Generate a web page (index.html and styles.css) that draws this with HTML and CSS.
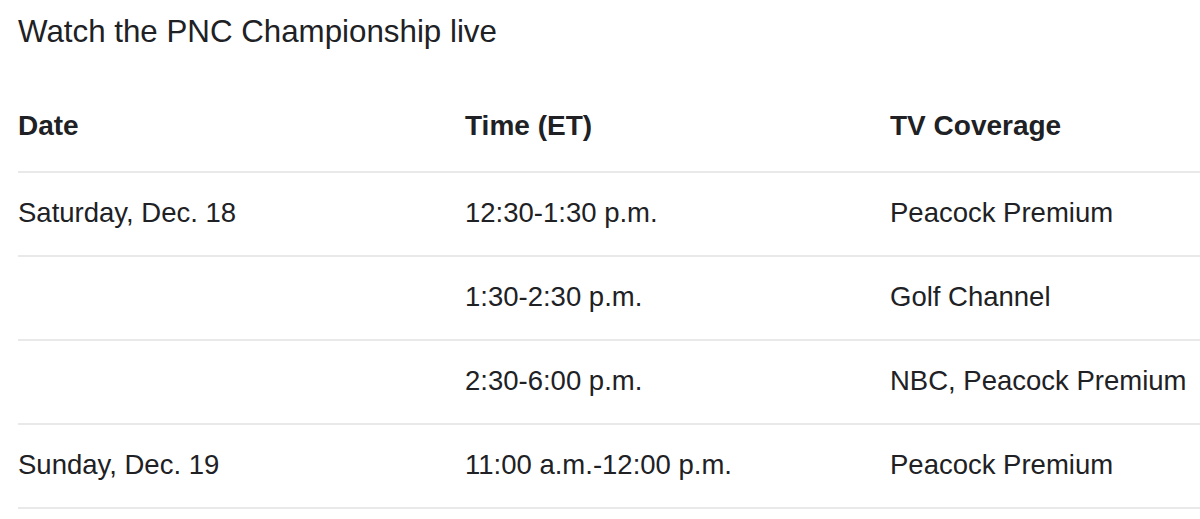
FILE: index.html
```html
<!DOCTYPE html>
<html lang="en">
<head>
<meta charset="utf-8">
<title>Watch the PNC Championship live</title>
<link rel="stylesheet" href="styles.css">
</head>
<body>
<div class="page">
  <h2 class="title">Watch the PNC Championship live</h2>
  <table class="schedule">
    <colgroup>
      <col class="c-date">
      <col class="c-time">
      <col class="c-tv">
    </colgroup>
    <thead>
      <tr><th>Date</th><th>Time (ET)</th><th>TV Coverage</th></tr>
    </thead>
    <tbody>
      <tr><td>Saturday, Dec. 18</td><td>12:30-1:30 p.m.</td><td>Peacock Premium</td></tr>
      <tr><td></td><td>1:30-2:30 p.m.</td><td>Golf Channel</td></tr>
      <tr><td></td><td>2:30-6:00 p.m.</td><td>NBC, Peacock Premium</td></tr>
      <tr><td>Sunday, Dec. 19</td><td>11:00 a.m.-12:00 p.m.</td><td>Peacock Premium</td></tr>
    </tbody>
  </table>
</div>
</body>
</html>
```

FILE: styles.css
```css
html, body {
  margin: 0;
  padding: 0;
  background: #ffffff;
}
body {
  overflow: hidden;
  font-family: "Liberation Sans", Arial, Helvetica, sans-serif;
  color: #202124;
}
.page {
  padding-left: 18px;
}
.title {
  margin: 14px 0 35px 0;
  font-size: 31.3px;
  line-height: 36px;
  font-weight: 400;
  color: #202124;
}
.schedule {
  border-collapse: collapse;
  table-layout: fixed;
  width: 1182px;
}
.c-date { width: 447px; }
.c-time { width: 425px; }
.c-tv { width: 310px; }
.schedule th,
.schedule td {
  text-align: left;
  vertical-align: top;
  padding: 24.5px 0 27.5px 0;
  font-size: 27.5px;
  line-height: 30px;
  white-space: nowrap;
}
.schedule th {
  font-weight: 700;
  font-size: 28px;
  padding-top: 26px;
  padding-bottom: 30px;
}
.schedule td {
  font-weight: 400;
}
.schedule tr {
  border-bottom: 2px solid #e9e9e9;
}
```
